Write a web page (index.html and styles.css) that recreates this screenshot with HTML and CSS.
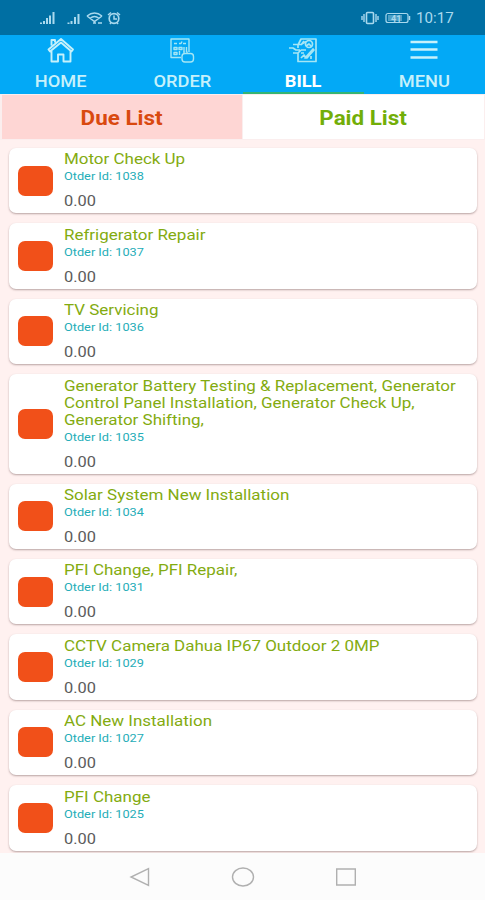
FILE: index.html
```html
<!DOCTYPE html>
<html lang="en">
<head>
<meta charset="utf-8">
<title>Bills</title>
<link rel="stylesheet" href="styles.css">
</head>
<body>
<header class="status">
  <svg class="status-left" width="84" height="16" viewBox="0 0 84 16" fill="none" stroke="currentColor">
    <path stroke-width="2" d="M2 14v-1.500M5 14v-3M8 14V8M11 14V5.500M14.500 14V2"/>
    <path stroke-width="2" d="M29.500 14v-1.500M32.500 14v-3M36 14V7M39.500 14V4"/>
    <path stroke-width="1.500" d="M48 6Q55.500 0 63 6M51 8.500Q55.500 4.500 60 8.500M48 6l7.500 5.500L63 6M54 13h3M59 13h4"/>
    <circle cx="75" cy="8.500" r="4.800" stroke-width="1.700"/>
    <path stroke-width="1.500" d="M69 5l3-2.500M81 5l-3-2.500M75 5.500V9h3M72 12.500l-1 1.500M78 12.500l1 1.500"/>
  </svg>
  <div class="status-right">
    <svg width="51" height="14" viewBox="0 0 51 14" fill="none" stroke="currentColor">
      <rect x="5.500" y="1.500" width="7" height="11" rx="1" stroke-width="1.600"/>
      <path stroke-width="1.400" d="M3 3v8M1 5v4M15 3v8M17 5v4"/>
      <rect x="25" y="2.500" width="22" height="9" rx="2" stroke-width="1.200"/>
      <path d="M27 4h14v6H27z" fill="currentColor" stroke="none" opacity=".45"/>
      <path d="M48.500 5v4" stroke-width="1.500"/>
      <text x="30" y="10.500" class="battery">41</text>
    </svg>
    <span class="clock">10:17</span>
  </div>
</header>
<nav class="tabs">
  <a class="tab">
    <svg width="28" height="28" viewBox="0 0 28 28" fill="none" stroke="currentColor" stroke-width="1.900" stroke-linejoin="round">
      <path d="M1.500 13.500L14 3l12 10.500-1.500 2L14 6.500 3 15.500zM4.500 9.500V4H8v2.500M4.500 15v10.500h6.500v-7h5.500v7h7V15"/>
    </svg>
    <span class="label home">HOME</span>
  </a>
  <a class="tab">
    <svg class="dim" width="28" height="28" viewBox="0 0 28 28" fill="none" stroke="currentColor" stroke-width="1.400" stroke-linejoin="round">
      <path d="M13 21.500H3V3h18v13M6 7.500h3M11 7.500h2l1-2M15 7.500h3M6 11.500h3v2H6zM11 11.500h3v2h-3zM16 11v5M18.500 11v5M6 16.500h3v2H6zM11.500 15v4"/>
      <rect x="14" y="17.500" width="11.500" height="8.500" rx="3"/>
      <path d="M16 17.500v-2M19 17.500v-2"/>
    </svg>
    <span class="label order">ORDER</span>
  </a>
  <a class="tab active">
    <svg class="dim" width="30" height="28" viewBox="0 0 30 28" fill="none" stroke="currentColor" stroke-width="1.700" stroke-linejoin="round">
      <path d="M10 12V9l3-6h15v22.500H10V17M5 8.500h8l5-3M1 12h4l3 2h4M5 17h5l3-3M13 9l3-4"/>
      <circle cx="21" cy="8" r="3.500"/>
      <path d="M18 10l3-2 3 3M13 14h5M13 17h3M13 22l3-3 2 3M17 22l8-9 1 1-7 8zM23 20v3"/>
    </svg>
    <span class="label bill">BILL</span>
  </a>
  <a class="tab">
    <svg width="28" height="28" viewBox="0 0 28 28" stroke="currentColor" stroke-width="2.300"><path d="M.5 6h27M.5 13.500h27M.5 21.500h27"/></svg>
    <span class="label menu">MENU</span>
  </a>
</nav>
<div class="switch">
  <div class="due"><span class="wide">Due List</span></div>
  <div class="paid"><span class="wide">Paid List</span></div>
</div>
<main class="list">
  <article class="card"><i class="box"></i><div class="info"><h2>Motor Check Up</h2><p class="id">Otder Id: 1038</p><p class="sum">0.00</p></div></article>
  <article class="card"><i class="box"></i><div class="info"><h2>Refrigerator Repair</h2><p class="id">Otder Id: 1037</p><p class="sum">0.00</p></div></article>
  <article class="card"><i class="box"></i><div class="info"><h2>TV Servicing</h2><p class="id">Otder Id: 1036</p><p class="sum">0.00</p></div></article>
  <article class="card"><i class="box"></i><div class="info"><h2>Generator Battery Testing &amp; Replacement, Generator<br>Control Panel Installation, Generator Check Up,<br>Generator Shifting,</h2><p class="id">Otder Id: 1035</p><p class="sum">0.00</p></div></article>
  <article class="card"><i class="box"></i><div class="info"><h2>Solar System New Installation</h2><p class="id">Otder Id: 1034</p><p class="sum">0.00</p></div></article>
  <article class="card"><i class="box"></i><div class="info"><h2>PFI Change, PFI Repair,</h2><p class="id">Otder Id: 1031</p><p class="sum">0.00</p></div></article>
  <article class="card"><i class="box"></i><div class="info"><h2>CCTV Camera Dahua IP67 Outdoor 2 0MP</h2><p class="id">Otder Id: 1029</p><p class="sum">0.00</p></div></article>
  <article class="card"><i class="box"></i><div class="info"><h2>AC New Installation</h2><p class="id">Otder Id: 1027</p><p class="sum">0.00</p></div></article>
  <article class="card"><i class="box"></i><div class="info"><h2>PFI Change</h2><p class="id">Otder Id: 1025</p><p class="sum">0.00</p></div></article>
</main>
<footer class="system">
  <svg width="24" height="24" viewBox="0 0 24 24"><path d="M20.500 3.500v17L3 12z"/></svg>
  <svg width="24" height="24" viewBox="0 0 24 24"><ellipse cx="12" cy="12" rx="10.500" ry="9"/></svg>
  <svg width="24" height="24" viewBox="0 0 24 24"><path d="M2.700 4h18.600v16H2.700z"/></svg>
</footer>
</body>
</html>
```

FILE: styles.css
```css
* { box-sizing: border-box; }
body {
  margin: 0;
  width: 485px;
  height: 900px;
  overflow: hidden;
  display: flex;
  flex-direction: column;
  font-family: Roboto, sans-serif;
  background: #fff1f0;
}
h2, p { margin: 0; font-weight: 400; }
.status {
  height: 35px;
  flex: none;
  display: flex;
  justify-content: space-between;
  padding: 10px 31px 0 39px;
  background: #006fa3;
  color: #a9d9ee;
}
.status-right { display: flex; height: 16px; align-items: center; gap: 4px; }
.battery { font-size: 9px; font-weight: 700; fill: currentColor; stroke: none; }
.clock { width: 38px; font-size: 14px; line-height: 16px; transform: scaleX(1.08); transform-origin: left; }
.tabs { height: 59px; flex: none; display: grid; grid-template-columns: repeat(4, 1fr); background: #03a9f6; }
.tab { display: flex; flex-direction: column; align-items: center; padding-top: 1px; color: #c6f1fb; border-bottom: 2px solid transparent; }
.tab svg { flex: none; }
.tab.active { color: #fff; border-bottom-color: #36b473; }
.tab .dim { color: #a5e6f5; }
.label { margin-top: 8px; font-size: 16px; line-height: 19px; font-weight: 500; transform: scaleX(1.14); }
.active .label { font-weight: 700; }
.switch { height: 46px; flex: none; display: grid; grid-template-columns: 240px 1fr; gap: 1px; padding: 1px 1px 1px 2px; background: #fbeeee; }
.switch > div { display: grid; place-items: center; padding-top: 2px; font-size: 20px; line-height: 24px; font-weight: 700; }
.due { background: #fed6d4; color: #d9490f; }
.paid { background: #fff; color: #72ae08; }
.wide { transform: scaleX(1.12); }
.list { flex: none; height: 713px; padding: 8px 8px 0 9px; display: flex; flex-direction: column; gap: 10px; }
.card {
  flex: none;
  display: flex;
  align-items: center;
  gap: 11px;
  padding: 2.4px 9px 0;
  min-height: 65.4px;
  border-radius: 7px;
  background: #fff;
  box-shadow: 0 1px 2px rgba(80, 50, 50, .4);
}
.box { flex: none; width: 35px; height: 30px; margin-top: -2.400px; border-radius: 7px; background: #f15019; }
.info { position: relative; top: 1px; transform: scaleX(1.17); transform-origin: left; white-space: nowrap; }
.info h2 { font-size: 14.5px; line-height: 17px; color: #83ab10; }
.id { font-size: 10.900px; line-height: 17px; font-weight: 400; color: #25adb8; }
.sum { font-size: 14px; line-height: 17px; padding-top: 8px; height: 29px; color: #5c5c5c; }
.system { flex: 1; display: flex; justify-content: center; gap: 79px; padding-top: 12px; background: #fcfcfc; }
.system svg { fill: none; stroke: #b0b0b0; stroke-width: 1.400; }
```
